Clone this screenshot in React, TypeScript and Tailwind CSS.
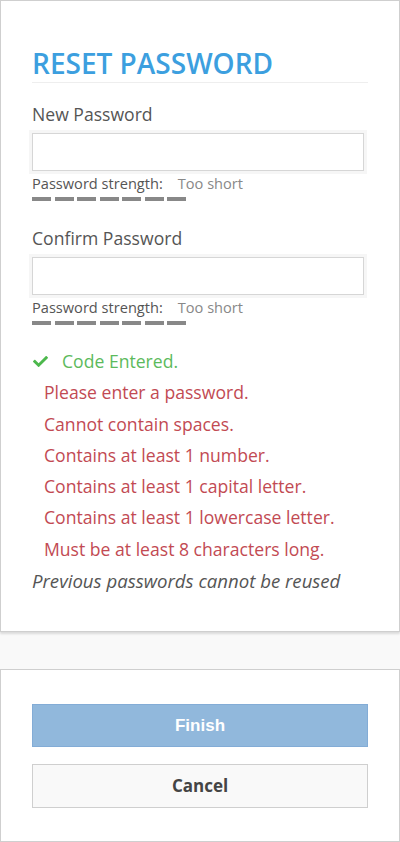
import React from "react";
import { FaCheck } from "react-icons/fa";

const rules = [
  "Please enter a password.",
  "Cannot contain spaces.",
  "Contains at least 1 number.",
  "Contains at least 1 capital letter.",
  "Contains at least 1 lowercase letter.",
  "Must be at least 8 characters long.",
];

function StrengthMeter() {
  return (
    <div>
      <div className="mt-[2px] flex text-[14.6px] leading-[20px]">
        <span className="text-[#555]">Password strength:</span>
        <span className="ml-[15px] text-[#888]">Too short</span>
      </div>
      <div className="mt-[4px] flex gap-[3.5px]">
        {Array.from({ length: 7 }).map((_, i) => (
          <div key={i} className="h-[4px] w-[19px] bg-[#888]" />
        ))}
      </div>
    </div>
  );
}

function PasswordField({ label, top }: { label: string; top: string }) {
  return (
    <div className={top}>
      <label className="block text-[17.6px] leading-[24px] text-[#555]">{label}</label>
      <input
        type="password"
        className="mt-[7px] block h-[38px] w-[332px] border border-[#d6d6d6] bg-white shadow-[0_0_0_3px_#f6f6f6] outline-none"
      />
      <StrengthMeter />
    </div>
  );
}

export default function App() {
  return (
    <div
      className="min-h-[842px] bg-[#f9f9f9]"
      style={{ fontFamily: "'Open Sans', 'Noto Sans', sans-serif" }}
    >
      <div className="h-[632px] border border-[#cfcfcf] bg-white px-[31px] pt-[46px] shadow-[0_2px_2px_rgba(0,0,0,0.12)]">
        <h1 className="border-b border-[#eeeeee] pb-[3px] text-[28px] font-semibold leading-[32px] text-[#3c9fdf]">
          RESET PASSWORD
        </h1>
        <PasswordField label="New Password" top="mt-[19px]" />
        <PasswordField label="Confirm Password" top="mt-[25px]" />

        <ul className="mt-[21px] text-[17.6px] leading-[31.3px]">
          <li className="flex items-center text-[#5cba5c]">
            <FaCheck className="ml-[1px] h-[15px] w-[15px] text-[#4cb84c]" />
            <span className="ml-[14px]">Code Entered.</span>
          </li>
          {rules.map((r) => (
            <li key={r} className="pl-[12px] text-[#c24a53]">
              {r}
            </li>
          ))}
          <li className="text-[18.6px] italic text-[#555]">Previous passwords cannot be reused</li>
        </ul>
      </div>

      <div className="mt-[37px] h-[173px] border border-[#cfcfcf] bg-white px-[31px] pt-[34px]">
        <button
          className="flex h-[43px] w-full items-center justify-center border border-[#83acd6] bg-[#91b8dc] text-[17px] font-bold text-white"
          style={{ fontFamily: "'Liberation Sans', Arial, sans-serif" }}
        >
          Finish
        </button>
        <button className="mt-[17px] flex h-[44px] w-full items-center justify-center border border-[#cfcfcf] bg-[#f9f9f9] text-[17px] font-bold text-[#444]">
          Cancel
        </button>
      </div>
    </div>
  );
}
